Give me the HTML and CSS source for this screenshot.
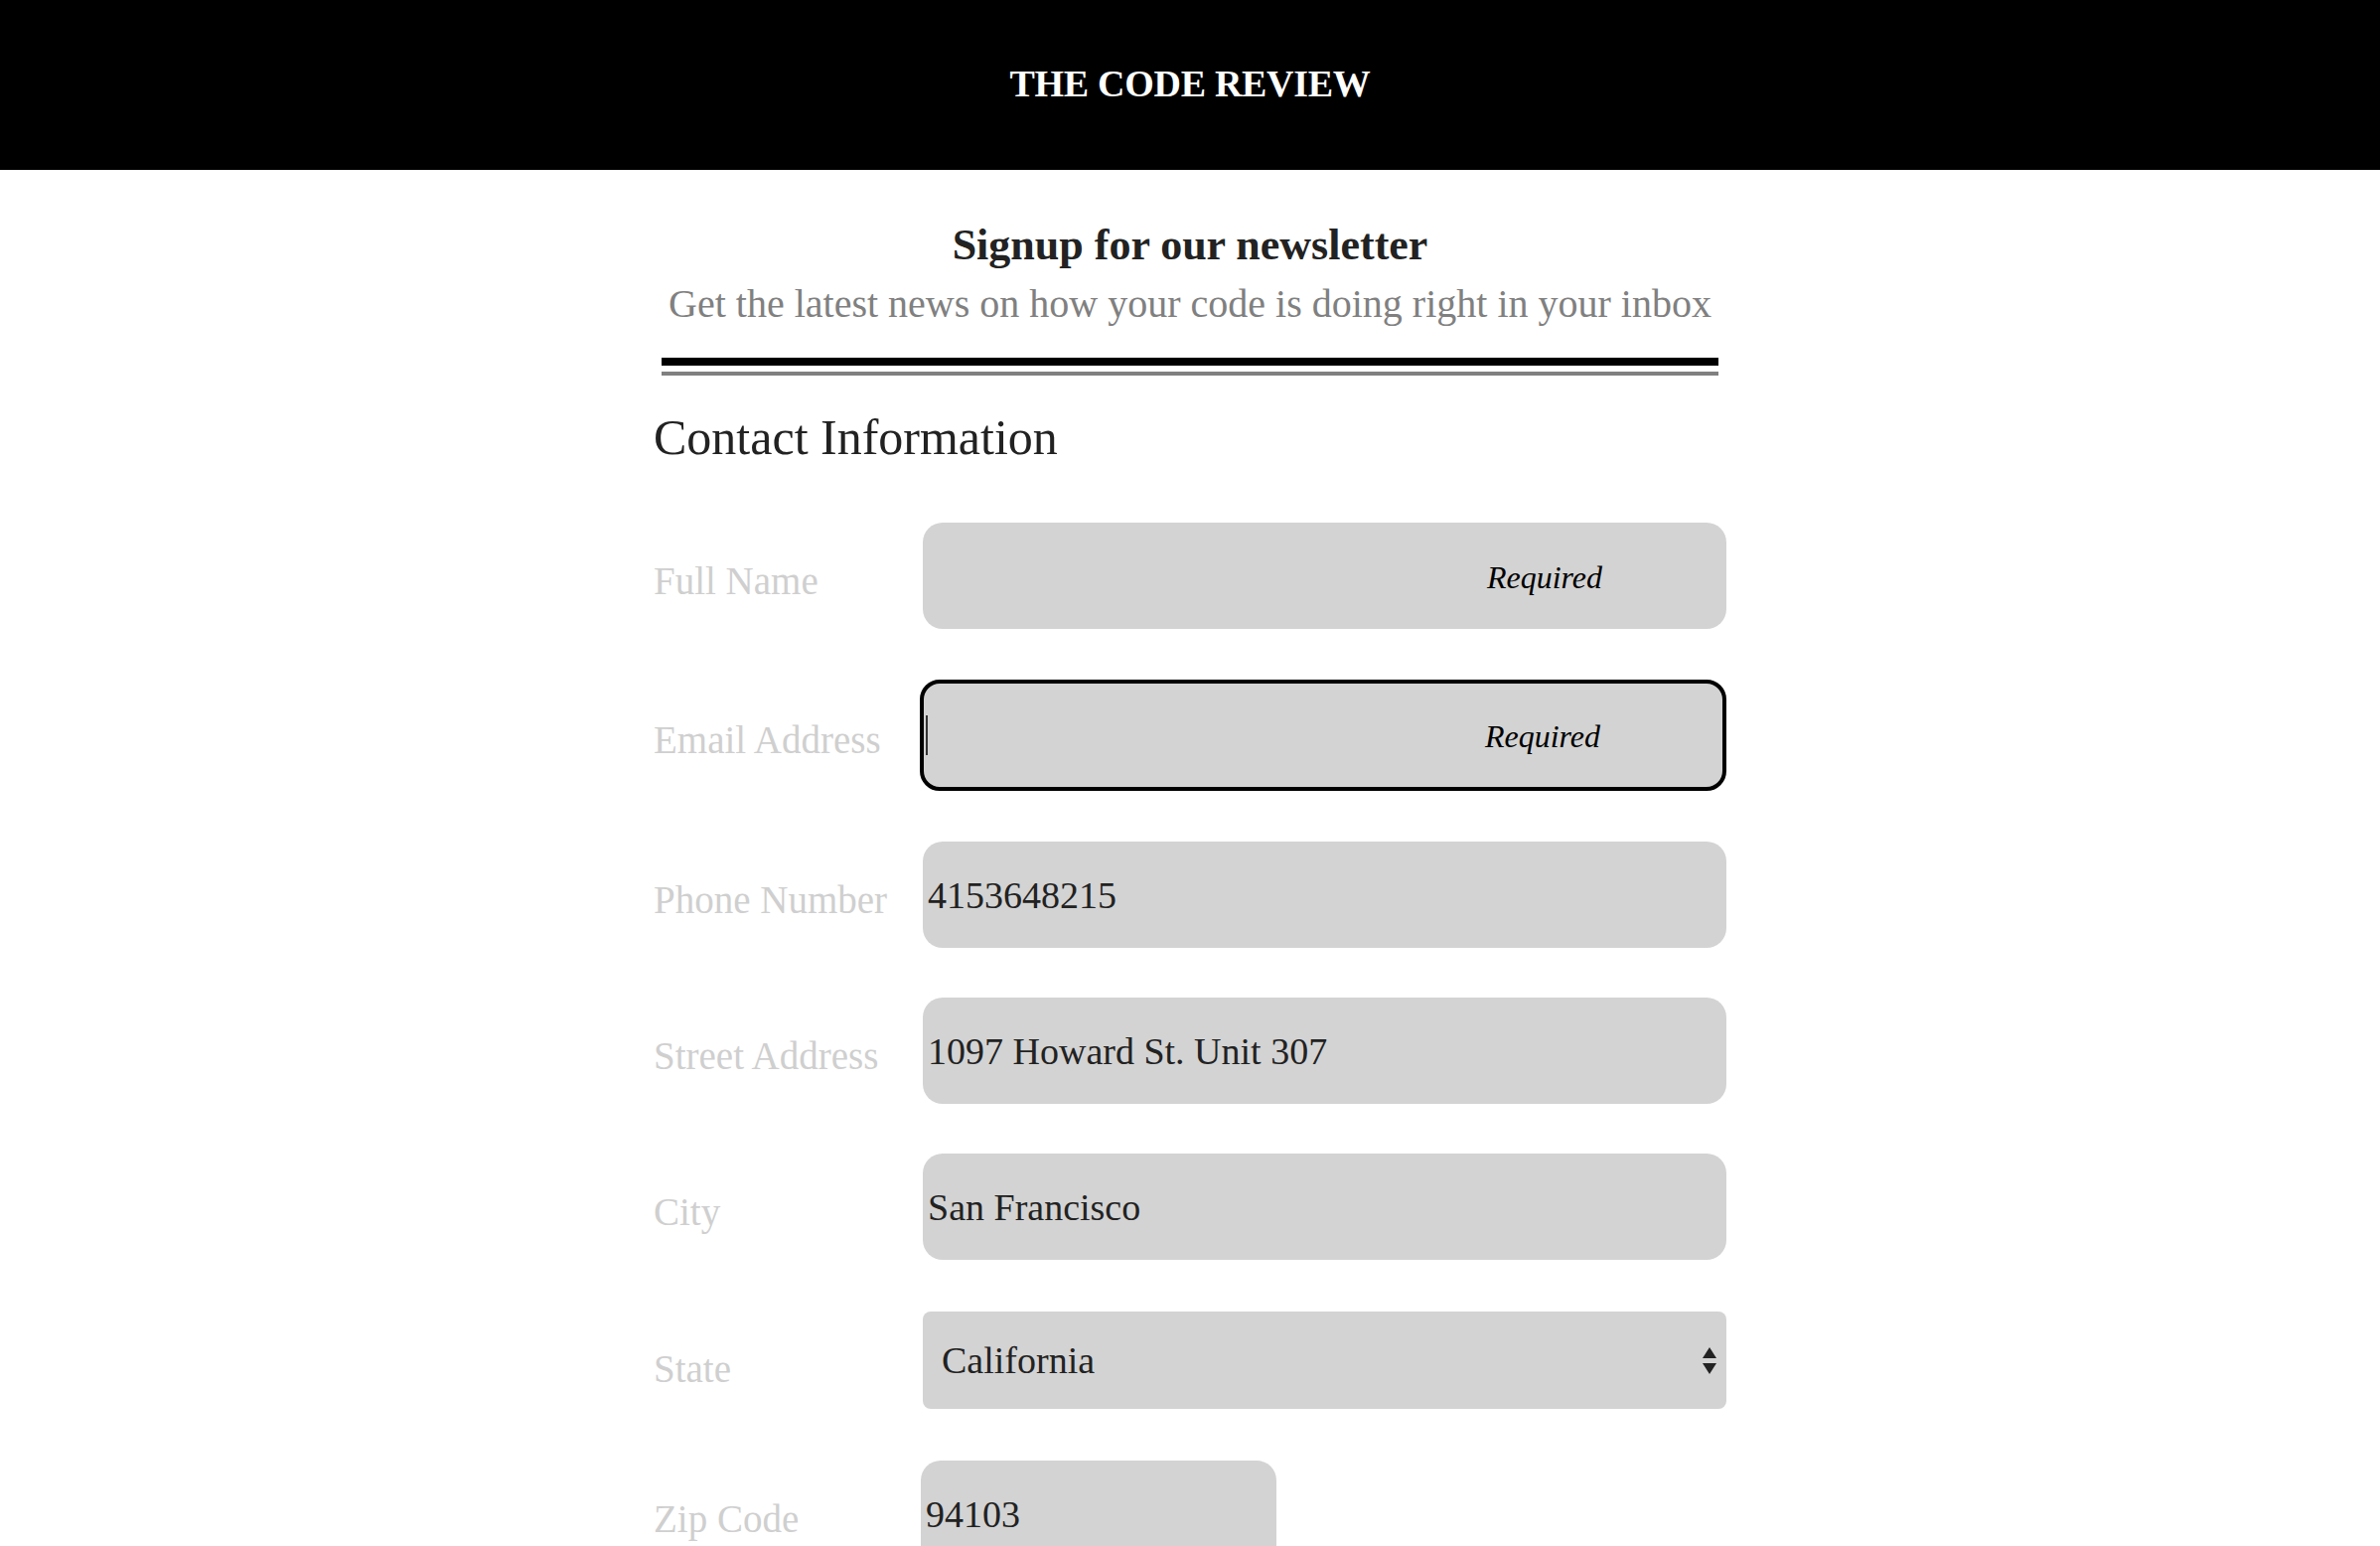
FILE: index.html
```
<!DOCTYPE html>
<html lang="en">
<head>
<meta charset="utf-8">
<title>The Code Review</title>
<link rel="stylesheet" href="styles.css">
</head>
<body>
<header class="header">
  <h1 class="brand">THE CODE REVIEW</h1>
</header>
<main class="main">
  <section class="intro">
    <h2 class="intro-title">Signup for our newsletter</h2>
    <p class="intro-sub">Get the latest news on how your code is doing right in your inbox</p>
    <div class="rule-thick"></div>
    <div class="rule-thin"></div>
  </section>
  <h3 class="section-title">Contact Information</h3>
  <form class="form">
    <div class="row">
      <label class="label" for="name">Full Name</label>
      <div class="field">
        <input class="input" id="name" type="text">
        <span class="req">Required</span>
      </div>
    </div>
    <div class="row row-email">
      <label class="label" for="email">Email Address</label>
      <div class="field">
        <input class="input input-focus" id="email" type="email">
        <span class="caret"></span>
        <span class="req req-email">Required</span>
      </div>
    </div>
    <div class="row">
      <label class="label" for="phone">Phone Number</label>
      <div class="field">
        <input class="input" id="phone" type="text" value="4153648215">
      </div>
    </div>
    <div class="row">
      <label class="label" for="street">Street Address</label>
      <div class="field">
        <input class="input" id="street" type="text" value="1097 Howard St. Unit 307">
      </div>
    </div>
    <div class="row">
      <label class="label" for="city">City</label>
      <div class="field">
        <input class="input" id="city" type="text" value="San Francisco">
      </div>
    </div>
    <div class="row row-state">
      <label class="label label-state" for="state">State</label>
      <div class="field">
        <select class="select" id="state">
          <option>California</option>
        </select>
        <svg class="arrows" width="14" height="27" viewBox="0 0 14 27" aria-hidden="true">
          <polygon points="7,0 14,11 0,11" fill="#222"/>
          <polygon points="0,16 14,16 7,27" fill="#222"/>
        </svg>
      </div>
    </div>
    <div class="row row-zip">
      <label class="label" for="zip">Zip Code</label>
      <div class="field field-zip">
        <input class="input input-zip" id="zip" type="text" value="94103">
      </div>
    </div>
  </form>
</main>
</body>
</html>
```
FILE: styles.css
```
* {
  box-sizing: border-box;
}

html, body {
  margin: 0;
  padding: 0;
  background: #fff;
}

body {
  font-family: "Liberation Serif", "DejaVu Serif", serif;
  color: #222;
  overflow: hidden;
}

.header {
  height: 171px;
  background: #000;
  display: flex;
  align-items: center;
  justify-content: center;
}

.brand {
  margin: 0;
  color: #fff;
  font-size: 38px;
  font-weight: 700;
  letter-spacing: -0.3px;
  line-height: 1;
  padding-bottom: 4px;
}

.main {
  width: 1080px;
  margin: 0 auto;
}

.intro {
  text-align: center;
  padding-top: 49px;
}

.intro-title {
  margin: 0;
  font-size: 44px;
  line-height: 53px;
  font-weight: 700;
  color: #222;
}

.intro-sub {
  margin: 9px 0 0;
  font-size: 40px;
  line-height: 48px;
  color: #808080;
}

.rule-thick {
  margin: 30px 8px 0;
  height: 8px;
  background: #000;
}

.rule-thin {
  margin: 6px 8px 0;
  height: 4px;
  background: #808080;
}

.section-title {
  margin: 32px 0 0;
  font-size: 50px;
  line-height: 60px;
  font-weight: 400;
  color: #222;
}

.form {
  margin-top: 56px;
  display: flex;
  flex-direction: column;
  gap: 50px;
}

.row {
  display: flex;
  align-items: center;
}

.row-email {
  margin: 1px 0;
}

.row-state {
  margin-top: 2px;
}

.row-zip {
  margin-top: 2px;
}

.label {
  width: 271px;
  flex: none;
  font-size: 39px;
  line-height: 48px;
  color: #cfcfcf;
  padding-top: 10px;
}

.label-state {
  padding-top: 18px;
}

.field {
  position: relative;
  width: 809px;
  flex: none;
}

.field-zip {
  width: 358px;
  margin-left: -2px;
}

.input {
  display: block;
  width: 100%;
  height: 107px;
  border: none;
  border-radius: 20px;
  background: #d3d3d3;
  font-family: "Liberation Serif", "DejaVu Serif", serif;
  font-size: 38px;
  color: #222;
  padding: 0 0 0 5px;
  outline: none;
}

.input-focus {
  height: 112px;
  border: 4px solid #000;
  border-radius: 20px;
  margin-left: -3px;
  width: calc(100% + 3px);
}

.caret {
  position: absolute;
  left: 3px;
  top: 36px;
  width: 2px;
  height: 40px;
  background: #333;
}

.req {
  position: absolute;
  right: 125px;
  top: 50%;
  transform: translateY(-50%);
  font-size: 32px;
  font-style: italic;
  color: #000;
  line-height: 1;
  padding-top: 2px;
}

.req-email {
  right: 127px;
}

.select {
  display: block;
  width: 100%;
  height: 98px;
  border: none;
  border-radius: 8px;
  background: #d3d3d3;
  font-family: "Liberation Serif", "DejaVu Serif", serif;
  font-size: 38px;
  color: #222;
  padding: 0 0 0 19px;
  appearance: none;
  -webkit-appearance: none;
  outline: none;
}

.arrows {
  position: absolute;
  right: 10px;
  top: 36px;
}
```
